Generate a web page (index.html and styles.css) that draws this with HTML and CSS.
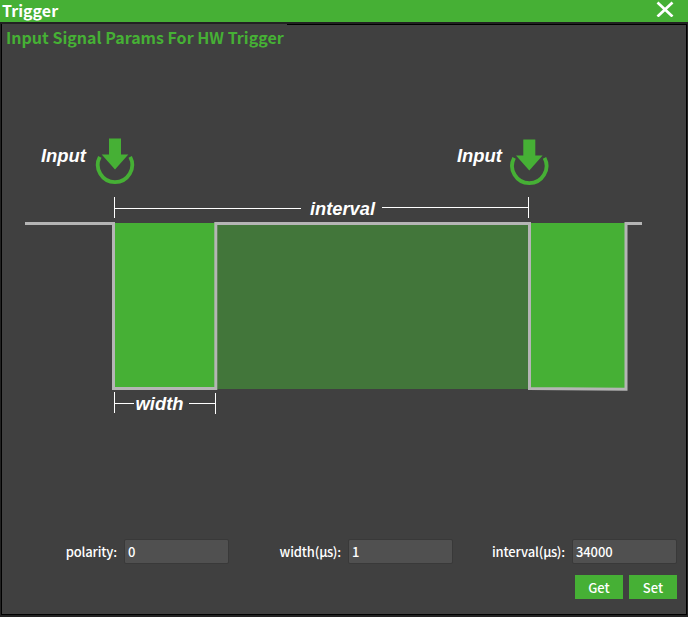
FILE: index.html
```html
<!DOCTYPE html>
<html lang="en">
<head>
<meta charset="utf-8">
<title>Trigger</title>
<link rel="stylesheet" href="styles.css">
</head>
<body>
<div class="window">
  <header class="titlebar">
    <h1 class="window-title">Trigger</h1>
    <button class="close" aria-label="Close">
      <svg width="18" height="16" viewBox="0 0 18 16"><path d="M1.500 1.500L16.500 15.500M16.500 1.500L1.500 15.500" fill="none" stroke="#fff" stroke-width="2.700"/></svg>
    </button>
  </header>
  <main class="panel">
    <h2 class="panel-title">Input Signal Params For HW Trigger</h2>
    <svg class="diagram" width="684" height="300" viewBox="2 130 684 300">
      <defs>
        <g id="trigger-icon">
          <path d="M-6 -27H6V-11H13.300L0 4L-13.300 -11H-6Z" fill="#46b035"/>
          <path d="M-15.200 -8.500A17.200 17.200 0 1 0 15.200 -8.500" fill="none" stroke="#46b035" stroke-width="3.800"/>
        </g>
      </defs>
      <use href="#trigger-icon" x="115" y="165.400"/>
      <use href="#trigger-icon" x="529.300" y="166.400"/>
      <text class="label" x="41" y="162" textLength="45" lengthAdjust="spacingAndGlyphs">Input</text>
      <text class="label" x="457" y="162" textLength="45" lengthAdjust="spacingAndGlyphs">Input</text>
      <path d="M114.500 197V218M115 208.500H301M382 207.500H528M528.500 197V218" class="measure"/>
      <text class="label" x="310" y="215" textLength="65" lengthAdjust="spacingAndGlyphs">interval</text>
      <rect x="114" y="223" width="102" height="165" fill="#46b035"/>
      <rect x="217" y="223" width="312" height="166" fill="#42763a"/>
      <rect x="530" y="223" width="96" height="165" fill="#46b035"/>
      <path d="M25 223.500H113.500V388.500H215.800V223.500H529.500V388.500L626 389.300V223.500H642" fill="none" stroke="#b5b5b5" stroke-width="3"/>
      <path d="M114.500 392V413M115 403.500H134M189 403.500H215M215.500 393V414" class="measure"/>
      <text class="label" x="135.500" y="410" textLength="48" lengthAdjust="spacingAndGlyphs">width</text>
    </svg>
    <form class="controls">
      <div class="fields">
        <label class="field">polarity:<input value="0"></label>
        <label class="field">width(<span class="unit">µs</span>):<input value="1"></label>
        <label class="field">interval(<span class="unit">µs</span>):<input value="34000"></label>
      </div>
      <div class="actions">
        <button type="button" class="action">Get</button>
        <button type="button" class="action">Set</button>
      </div>
    </form>
  </main>
</div>
</body>
</html>
```
FILE: styles.css
```css
* { box-sizing: border-box; }
body {
  margin: 0;
  background: #222;
  color: #fff;
  font-family: "Noto Sans CJK SC", "Noto Sans", sans-serif;
}
.window {
  width: 688px;
  height: 617px;
  overflow: hidden;
}
.titlebar {
  display: flex;
  justify-content: space-between;
  align-items: flex-start;
  height: 22px;
  padding: 0 14px 0 2px;
  background: #46b035;
}
.window-title {
  margin: 0;
  font-size: 16px;
  line-height: 20px;
  font-weight: 700;
}
.close {
  display: flex;
  padding: 1px 0 0;
  border: 0;
  background: none;
}
.panel {
  display: flex;
  flex-direction: column;
  width: 686px;
  height: 591px;
  margin: 2px 0 0 1px;
  border: 1px solid #000;
  background: #404040;
}
.panel-title {
  width: 285px;
  height: 25px;
  margin: -1px 0 81px;
  padding-left: 4px;
  background: #404040;
  color: #46b035;
  font-size: 16px;
  line-height: 27px;
  font-weight: 700;
  white-space: nowrap;
}
.diagram { display: block; flex: none; }
.measure { fill: none; stroke: #fff; stroke-width: 1; }
.label {
  fill: #fff;
  font: italic 700 18px "Liberation Sans", sans-serif;
}
.controls { padding: 109px 9px 0 0; }
.fields { display: flex; justify-content: flex-end; }
.field {
  display: flex;
  flex: none;
  justify-content: flex-end;
  align-items: center;
  width: 224px;
  font-size: 13px;
  font-weight: 500;
  letter-spacing: -0.15px;
}
.unit { letter-spacing: -0.5px; }
.field input {
  width: 105px;
  height: 25px;
  margin: 0 0 0 7px;
  padding: 0 3px;
  border: 1px solid #393939;
  border-radius: 2px;
  background: #505050;
  color: #fff;
  font: inherit;
  letter-spacing: -0.1px;
}
.actions {
  display: flex;
  justify-content: flex-end;
  gap: 6px;
  margin: 11px 0 0;
}
.action {
  width: 48px;
  height: 24px;
  padding: 0;
  border: 0;
  background: #46b035;
  color: #fff;
  font: 500 13px "Noto Sans CJK SC", sans-serif;
}
```
